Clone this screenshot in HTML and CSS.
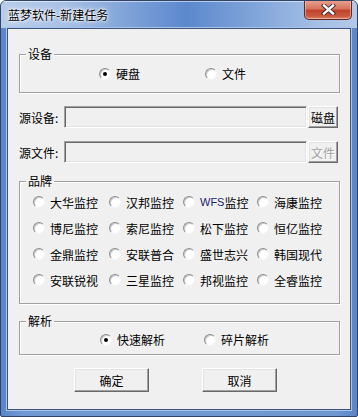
FILE: index.html
```html
<!DOCTYPE html>
<html lang="zh-CN">
<head>
    <meta charset="UTF-8">
    <meta name="viewport" content="width=device-width, initial-scale=1.0">
    <title>蓝梦软件-新建任务</title>
    <link rel="stylesheet" href="styles.css">
</head>
<body>
    <div class="window">
        <div class="titlebar">
            <span class="title">蓝梦软件-新建任务</span>
            <div class="close-btn">
                <svg width="15" height="11" viewBox="0 0 15 11">
                    <path d="M3 1.5 L12 9.5 M12 1.5 L3 9.5" stroke="#3a2a2a" stroke-width="4.2" stroke-linecap="square"/>
                    <path d="M3 1.5 L12 9.5 M12 1.5 L3 9.5" stroke="#ffffff" stroke-width="2.4" stroke-linecap="square"/>
                </svg>
            </div>
        </div>

        <div class="client">
            <!-- 设备 -->
            <div class="group group-device">
                <span class="group-title">设备</span>
                <div class="opt"><span class="radio checked"></span>硬盘</div>
                <div class="opt"><span class="radio"></span>文件</div>
            </div>

            <div class="field-row">
                <span class="field-label">源设备:</span>
                <span class="edit"></span>
                <span class="btn btn-small">磁盘</span>
            </div>

            <div class="field-row">
                <span class="field-label">源文件:</span>
                <span class="edit"></span>
                <span class="btn btn-small disabled">文件</span>
            </div>

            <!-- 品牌 -->
            <div class="group group-brand">
                <span class="group-title">品牌</span>
                <div class="opt"><span class="radio"></span>大华监控</div>
                <div class="opt"><span class="radio"></span>汉邦监控</div>
                <div class="opt"><span class="radio"></span><span class="latin">WFS</span>监控</div>
                <div class="opt"><span class="radio"></span>海康监控</div>

                <div class="opt"><span class="radio"></span>博尼监控</div>
                <div class="opt"><span class="radio"></span>索尼监控</div>
                <div class="opt"><span class="radio"></span>松下监控</div>
                <div class="opt"><span class="radio"></span>恒亿监控</div>

                <div class="opt"><span class="radio"></span>金鼎监控</div>
                <div class="opt"><span class="radio"></span>安联普合</div>
                <div class="opt"><span class="radio"></span>盛世志兴</div>
                <div class="opt"><span class="radio"></span>韩国现代</div>

                <div class="opt"><span class="radio"></span>安联锐视</div>
                <div class="opt"><span class="radio"></span>三星监控</div>
                <div class="opt"><span class="radio"></span>邦视监控</div>
                <div class="opt"><span class="radio"></span>全睿监控</div>
            </div>

            <!-- 解析 -->
            <div class="group group-parse">
                <span class="group-title">解析</span>
                <div class="opt"><span class="radio checked"></span>快速解析</div>
                <div class="opt"><span class="radio"></span>碎片解析</div>
            </div>

            <div class="actions">
                <span class="btn btn-action">确定</span>
                <span class="btn btn-action">取消</span>
            </div>
        </div>
    </div>
</body>
</html>
```

FILE: styles.css
```css
* {
    box-sizing: border-box;
}

body {
    margin: 0;
    font-family: "Noto Sans CJK SC", "Liberation Sans", sans-serif;
    font-size: 12px;
    color: #000;
    background: #fff;
}

.window {
    width: 358px;
    height: 417px;
    display: flex;
    flex-direction: column;
    background: linear-gradient(to right, #5b85c6, #7099d4 6%, #6f97d2 94%, #5b85c6);
    border: 1px solid #2f4466;
    border-radius: 6px 6px 2px 2px;
    overflow: hidden;
}

.titlebar {
    height: 27px;
    flex: none;
    display: flex;
    justify-content: space-between;
    align-items: flex-start;
    background: linear-gradient(to right, #b9cdea 0%, #a7c0e5 18%, #7ea2d8 36%, #5b88cd 52%, #7ea3d9 70%, #a3bde4 88%, #b3c9e9 100%);
    box-shadow: inset 0 1px 0 rgba(255,255,255,0.55);
}

.title {
    padding: 7px 0 0 7px;
    line-height: 14px;
    font-size: 12px;
    text-shadow: 0 0 6px #fff, 0 0 3px #fff, 0 0 2px #fff;
}

.close-btn {
    width: 48px;
    height: 20px;
    margin: -1px 5px 0 0;
    display: flex;
    align-items: center;
    justify-content: center;
    background: linear-gradient(#eaa493, #d6745f 45%, #c0432a 55%, #c9583e 85%, #dd8a6c);
    border: 1px solid #5e2a22;
    border-top: none;
    border-radius: 0 0 5px 5px;
    box-shadow: inset 0 0 0 1px rgba(255,220,210,0.45);
}

.client {
    flex: 1;
    margin: 0 6px 6px 6px;
    padding: 0 10px 0 11px;
    display: flex;
    flex-direction: column;
    background: #f0f0f0;
    border: 1px solid #3e5479;
    box-shadow: 0 0 0 1px #a9c4ea;
}

/* group boxes */
.group {
    position: relative;
    border: 1px solid #a0a0a0;
    box-shadow: 1px 1px 0 #fff, inset 1px 1px 0 #fff;
}

.group-title {
    position: absolute;
    top: -8px;
    left: 6px;
    padding: 0 2px;
    line-height: 14px;
    background: #f0f0f0;
}

.opt {
    display: flex;
    align-items: center;
    white-space: nowrap;
}

.radio {
    width: 12px;
    height: 12px;
    flex: none;
    margin-right: 5px;
    border-radius: 50%;
    border: 1px solid;
    border-color: #8e8e8e #f4f4f4 #f4f4f4 #8e8e8e;
    background: #fff;
    box-shadow: inset 1px 1px 0 #c8c8c8;
    display: flex;
    align-items: center;
    justify-content: center;
}

.radio.checked::after {
    content: "";
    width: 4px;
    height: 4px;
    border-radius: 50%;
    background: #000;
}

.latin {
    font-family: "Liberation Sans", sans-serif;
    font-size: 11px;
    color: #22226e;
}

.group-device {
    margin-top: 25px;
    height: 39px;
    padding-left: 79px;
    display: flex;
    align-items: center;
}

.group-device .opt {
    width: 106px;
}

.group-brand {
    margin-top: 18px;
    height: 123px;
    padding: 7px 0 0 13px;
    display: grid;
    grid-template-columns: 76px 74px 74px 1fr;
    grid-auto-rows: 26px;
}

.group-parse {
    margin-top: 17px;
    height: 34px;
    padding: 3px 0 0 80px;
    display: flex;
    align-items: center;
}

.group-parse .opt {
    width: 104px;
}

/* source rows */
.field-row {
    margin-top: 13px;
    height: 22px;
    display: flex;
    align-items: center;
}

.field-label {
    width: 45px;
}

.edit {
    width: 243px;
    height: 22px;
    background: #f0f0f0;
    border: 1px solid;
    border-color: #a0a0a0 #fff #fff #a0a0a0;
    box-shadow: inset 1px 1px 0 #696969, inset -1px -1px 0 #e3e3e3;
}

.btn {
    display: flex;
    align-items: center;
    justify-content: center;
    background: #f0f0f0;
    border: 1px solid;
    border-color: #fff #696969 #696969 #fff;
    box-shadow: inset -1px -1px 0 #a0a0a0, inset 1px 1px 0 #e3e3e3;
}

.btn-small {
    width: 30px;
    height: 22px;
    margin-left: 1px;
}

.btn.disabled {
    color: #a0a0a0;
    text-shadow: 1px 1px 0 #fff;
}

.actions {
    margin-top: 13px;
    padding-left: 55px;
    display: flex;
    gap: 53px;
}

.btn-action {
    width: 75px;
    height: 24px;
}
```
